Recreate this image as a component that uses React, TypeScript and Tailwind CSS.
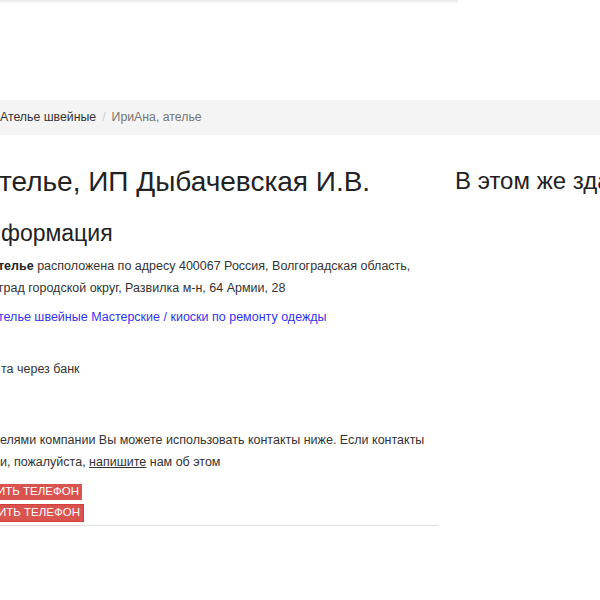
import React from 'react';

const font = { fontFamily: '"Liberation Sans", Arial, sans-serif' };

const PhoneButton: React.FC<{ label: string; big?: boolean }> = ({ label, big = false }) => (
  <div
    className={`inline-flex items-center bg-[#d9534f] text-white uppercase -ml-[3px] pr-[3px] text-[11.5px] ${
      big ? 'h-[18px] border border-[#d43f3a]' : 'h-[16px]'
    }`}
  >
    {label}
  </div>
);

export default function App() {
  return (
    <div className="w-[600px] h-[600px] overflow-hidden bg-white text-[#333]" style={font}>
      {/* header edge */}
      <div className="w-[458px] h-[2px] bg-[#ebebf0] shadow-[0_1px_2px_rgba(0,0,0,0.04)]" />

      <div className="h-[98px]" />

      {/* breadcrumb */}
      <div className="h-[35px] bg-[#f4f4f4] flex items-center text-[12.3px] whitespace-nowrap">
        <span className="text-[#333]">Ателье швейные</span>
        <span className="text-[#ccc] px-[6px]">/</span>
        <span className="text-[#777]">ИриАна, ателье</span>
      </div>

      <div className="flex">
        {/* main column */}
        <div className="w-[438px] shrink-0 whitespace-nowrap overflow-hidden">
          <h1 className="text-[28px] leading-[32px] mt-[31px] -ml-[1px] text-[#222]">
            телье, ИП Дыбачевская И.В.
          </h1>
          <h2 className="text-[23px] leading-[28px] mt-[21px] ml-[1px] text-[#222]">формация</h2>

          <div className="text-[12.5px] leading-[22px] mt-[8px]">
            <p className="-ml-[2px]">
              <b className="text-[#222]">телье</b> расположена по адресу 400067 Россия, Волгоградская область,
            </p>
            <p className="-ml-[1px]">град городской округ, Развилка м-н, 64 Армии, 28</p>
          </div>

          <p className="text-[12.5px] leading-[22px] mt-[7px] -ml-[2px] text-[#3333ee]">
            телье швейные Мастерские / киоски по ремонту одежды
          </p>

          <p className="text-[12.5px] leading-[22px] mt-[30px] ml-[1px]">та через банк</p>

          <div className="text-[12.5px] leading-[22px] mt-[49px]">
            <p>елями компании Вы можете использовать контакты ниже. Если контакты</p>
            <p>
              и, пожалуйста, <span className="underline">напишите</span> нам об этом
            </p>
          </div>

          <div className="flex flex-col items-start mt-[11px] gap-[4px]">
            <PhoneButton label="ИТЬ ТЕЛЕФОН" />
            <PhoneButton label="ИТЬ ТЕЛЕФОН" big />
          </div>

          <div className="h-px bg-[#dddddd] mt-[3px]" />
        </div>

        {/* side column */}
        <div className="pl-[17px] whitespace-nowrap">
          <h3 className="text-[24px] leading-[28px] mt-[32px] text-[#222]">В этом же здании</h3>
        </div>
      </div>
    </div>
  );
}
